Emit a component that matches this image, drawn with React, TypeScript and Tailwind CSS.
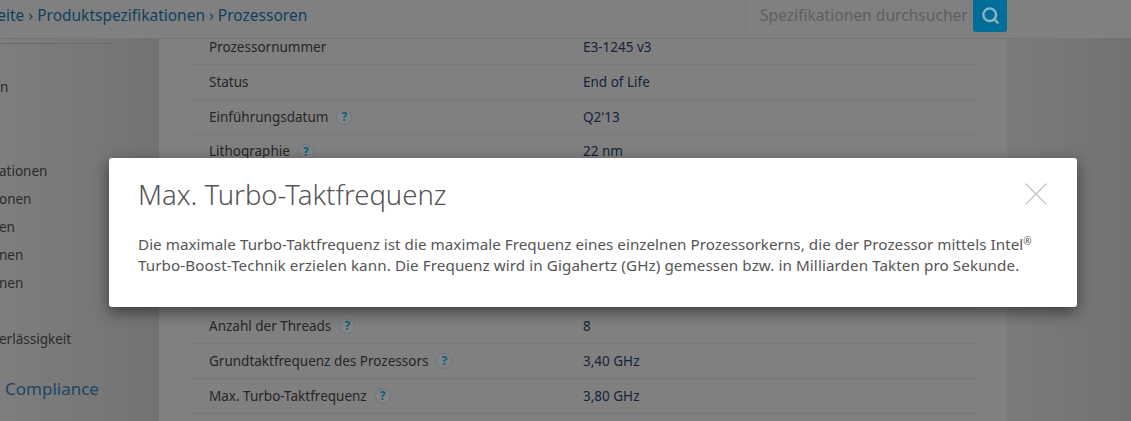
import { Search, X } from "lucide-react";

const rows = [
  { label: "Prozessornummer", value: "E3-1245 v3" },
  { label: "Status", value: "End of Life" },
  { label: "Einführungsdatum", value: "Q2'13", help: true },
  { label: "Lithographie", value: "22 nm", help: true },
  { label: "", value: "" },
  { label: "", value: "" },
  { label: "", value: "" },
  { label: "", value: "" },
  { label: "Anzahl der Threads", value: "8", help: true },
  { label: "Grundtaktfrequenz des Prozessors", value: "3,40 GHz", help: true },
  { label: "Max. Turbo-Taktfrequenz", value: "3,80 GHz", help: true },
];

const sideItems = ["ationen", "onen", "en", "nen", "nen"];

const HelpBadge = () => (
  <span className="ml-[8px] flex h-[16px] w-[16px] items-center justify-center rounded-full border border-[#687a84] bg-[#848484] text-[12px] font-bold leading-none text-[#0b5f80]">
    ?
  </span>
);

export default function App() {
  return (
    <div className="relative h-[421px] w-[1131px] overflow-hidden bg-[#777777] font-['Noto_Sans',sans-serif] text-[13.5px] text-[#262626]">
      {/* HEADER */}
      <header className="flex h-[39px] items-start border-b border-[#747474] bg-[#808080]">
        <div className="mt-[4px] w-[745px] overflow-hidden whitespace-nowrap text-[15.5px] text-[#11405f]">
          <span className="-ml-[45px] inline-block">
            Startseite › Produktspezifikationen › Prozessoren
          </span>
        </div>
        <div className="flex h-full items-start border-l border-[#7b7b7b] pl-[14px]">
          <span className="mt-[4px] w-[207px] overflow-hidden whitespace-nowrap text-[15.6px] text-[#5f5f5f]">
            Spezifikationen durchsuchen
          </span>
          <button className="ml-[6px] flex h-[32px] w-[34px] items-center justify-center rounded-b-[3px] bg-[#006e98] pb-[2px]">
            <Search className="h-[19px] w-[19px] text-[#8fb2c0]" strokeWidth={3} />
          </button>
        </div>
      </header>

      <div className="flex h-[382px] overflow-hidden">
        {/* SIDEBAR */}
        <aside className="w-[159px] shrink-0 bg-gradient-to-r from-[#7e7e7e] to-[#737373] text-[#2b2b2b]">
          <div className="h-px w-[113px] translate-y-[4px] bg-[#6a6a6a]" />
          <div className="mt-[39px] h-4 leading-4">n</div>
          <div className="-ml-px mt-[62px] flex flex-col">
            {sideItems.map((label, i) => (
              <div key={i} className="h-7 leading-7">{label}</div>
            ))}
          </div>
          <div className="-ml-px mt-[28px] leading-7">erlässigkeit</div>
          <div className="mt-[23px] pl-[5px] text-[17px] text-[#1d4564]">Compliance</div>
        </aside>

        {/* SPECS */}
        <main className="w-[848px] shrink-0 overflow-hidden bg-[#808080] pl-[32px] pr-[31px]">
          <div className="-mt-[9px]">
            {rows.map((row, i) => (
              <div key={i} className="flex h-[34.9px] items-center border-b border-[#787878]">
                <div className="flex w-[392px] items-center pl-[18px]">
                  {row.label}
                  {row.help && <HelpBadge />}
                </div>
                <div className="text-[#14243a]">{row.value}</div>
              </div>
            ))}
          </div>
        </main>

        <div className="flex-1 bg-gradient-to-r from-[#7b7b7b] to-[#727272]" />
      </div>

      {/* MODAL */}
      <div className="absolute left-[109px] top-[158px] h-[149px] w-[968px] rounded-[3px] bg-white pl-[29px] pt-[21px] text-[#555555] shadow-[0_5px_15px_rgba(0,0,0,0.5)]">
        <h2 className="text-[27.5px] font-light leading-[32px]">Max. Turbo-Taktfrequenz</h2>
        <p className="mt-[23px] w-[920px] text-[15.2px] leading-[20.5px]">
          <span className="tracking-[0.045px]">
            Die maximale Turbo-Taktfrequenz ist die maximale Frequenz eines einzelnen Prozessorkerns, die der Prozessor mittels Intel
          </span>
          <sup className="text-[10px]">®</sup>
          <br />
          <span className="tracking-[0.09px]">
            Turbo-Boost-Technik erzielen kann. Die Frequenz wird in Gigahertz (GHz) gemessen bzw. in Milliarden Takten pro Sekunde.
          </span>
        </p>
        <X className="absolute right-[21px] top-[16px] h-[40px] w-[40px] text-[#c4c4c4]" strokeWidth={0.75} />
      </div>
    </div>
  );
}
